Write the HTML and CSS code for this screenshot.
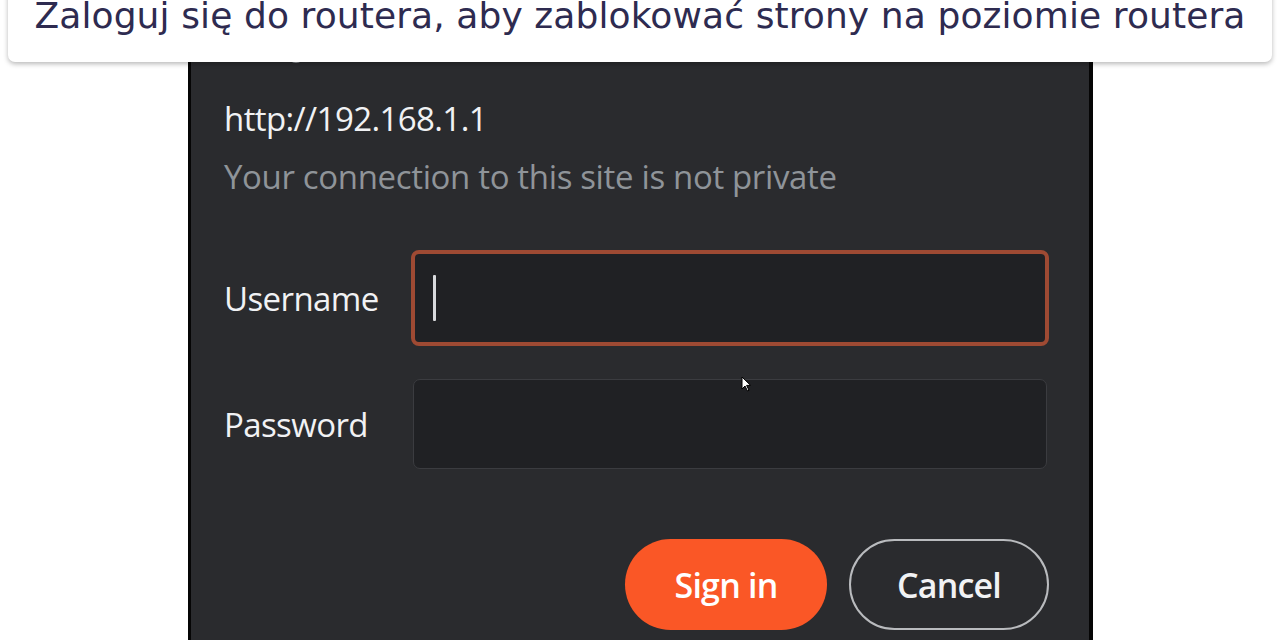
FILE: index.html
```html
<!DOCTYPE html>
<html lang="pl">
<head>
<meta charset="utf-8">
<title>Logowanie do routera</title>
<link rel="stylesheet" href="styles.css">
</head>
<body>
<div class="stage">
  <div class="dialog">
    <div class="dialog-top"><span class="top-icon"></span></div>
    <div class="url">http://192.168.1.1</div>
    <div class="subtitle">Your connection to this site is not private</div>
    <div class="form">
      <div class="row">
        <label class="label">Username</label>
        <div class="input focused"><span class="caret"></span></div>
      </div>
      <div class="row">
        <label class="label">Password</label>
        <div class="input plain"></div>
      </div>
    </div>
    <div class="actions">
      <button class="btn primary">Sign in</button>
      <button class="btn secondary">Cancel</button>
    </div>
  </div>
  <div class="banner">
    <span class="banner-text">Zaloguj się do routera, aby zablokować strony na poziomie routera</span>
  </div>
  <svg class="pointer" width="12" height="18" viewBox="0 0 12 18">
    <path d="M1 1 L1 13 L4 10 L6.5 15 L8 14.3 L5.6 9.4 L9.6 9.4 Z" fill="#ffffff" stroke="#000" stroke-width="1"/>
  </svg>
</div>
</body>
</html>
```
FILE: styles.css
```css
* { box-sizing: border-box; }
html, body {
  margin: 0;
  padding: 0;
  background: #ffffff;
  overflow: hidden;
}
.stage {
  position: relative;
  width: 1280px;
  height: 640px;
  overflow: hidden;
}
.dialog {
  margin-left: 188px;
  width: 905px;
  height: 640px;
  background: #2a2b2e;
  border-left: 3px solid #050505;
  border-right: 4px solid #050505;
  padding: 0 40px 0 33px;
  font-family: "Open Sans", "Noto Sans", sans-serif;
  color: #eceef0;
}
.dialog-top {
  height: 60px;
  padding-left: 64px;
  display: flex;
  align-items: flex-end;
}
.top-icon {
  width: 16px;
  height: 16px;
  border-radius: 50%;
  background: #8e9296;
  margin-bottom: -3px;
}
.url {
  margin-top: 41px;
  font-size: 33px;
  font-weight: 500;
  line-height: 36px;
  letter-spacing: -0.6px;
  color: #f1f2f4;
}
.subtitle {
  margin-top: 22px;
  font-size: 33px;
  line-height: 36px;
  letter-spacing: -0.35px;
  color: #8f9499;
}
.form {
  margin-top: 55px;
  display: flex;
  flex-direction: column;
  gap: 33px;
}
.row {
  display: flex;
  align-items: center;
}
.label {
  width: 187px;
  flex: none;
  font-size: 33px;
  font-weight: 500;
  letter-spacing: -0.6px;
  color: #f1f2f4;
}
.input {
  background: #202124;
  display: flex;
  align-items: center;
}
.input.focused {
  width: 638px;
  height: 96px;
  border: 4px solid #9e4a33;
  border-radius: 8px;
  padding-left: 18px;
}
.input.plain {
  width: 634px;
  height: 90px;
  margin-left: 2px;
  border: 1.5px solid #3b3c40;
  border-radius: 7px;
}
.caret {
  width: 3px;
  height: 46px;
  background: #d8dadd;
  border-radius: 1px;
}
.actions {
  margin-top: 70px;
  display: flex;
  justify-content: flex-end;
  gap: 22px;
}
.btn {
  font-family: "Open Sans", "Noto Sans", sans-serif;
  font-size: 34px;
  font-weight: 600;
  letter-spacing: -0.8px;
  height: 91px;
  border-radius: 46px;
  padding: 0;
  cursor: default;
}
.btn.primary {
  width: 202px;
  background: #fa5726;
  color: #ffffff;
  border: none;
}
.btn.secondary {
  width: 200px;
  background: transparent;
  color: #f1f2f4;
  border: 2px solid #b9bbbe;
}
.banner {
  position: absolute;
  left: 8px;
  top: -20px;
  width: 1264px;
  height: 82px;
  background: #ffffff;
  border-radius: 0 0 7px 7px;
  box-shadow: 0 2px 5px rgba(0, 0, 0, 0.28);
  display: flex;
  justify-content: center;
  align-items: flex-start;
}
.banner-text {
  margin-top: 21px;
  font-family: "DejaVu Sans", "Noto Sans", sans-serif;
  font-size: 36px;
  line-height: 30px;
  color: #2e2b50;
  letter-spacing: 0.1px;
}
.pointer {
  position: absolute;
  left: 741px;
  top: 376px;
}
```
